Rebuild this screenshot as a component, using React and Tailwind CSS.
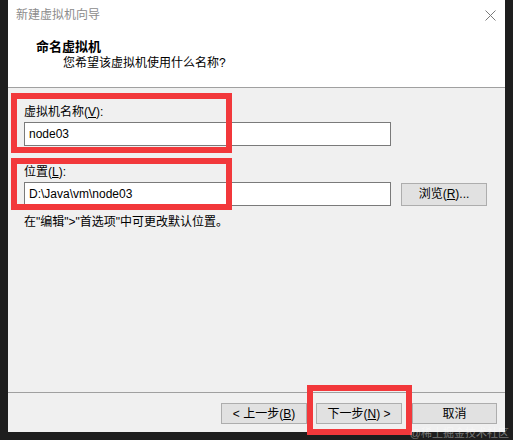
import React from 'react';

const font = { fontFamily: '"Liberation Sans", "Noto Sans CJK SC", sans-serif' };

function WinButton({ children, className = '' }) {
  return (
    <button
      className={`h-[21px] border border-[#adadad] bg-[#e1e1e1] text-[12px] leading-none text-black flex items-center justify-center ${className}`}
    >
      {children}
    </button>
  );
}

function App() {
  return (
    <div className="relative w-[513px] h-[440px] bg-[#1e1e1e] overflow-hidden" style={font}>
      <div className="ml-[8px] w-[497px] h-[432px] flex flex-col bg-[#f0f0f0]">
        {/* header */}
        <div className="h-[88px] bg-white border-b border-[#a0a0a0] flex flex-col">
          <div className="h-[30px] flex items-center justify-between pl-[8px] pr-[9px]">
            <span className="text-[12px] text-[#8c8c8c] leading-none">新建虚拟机向导</span>
            <svg width="11" height="11" viewBox="0 0 11 11" className="text-[#7a7a7a]">
              <path d="M0.5 0.5 L10.5 10.5 M10.5 0.5 L0.5 10.5" stroke="currentColor" strokeWidth="1" fill="none" />
            </svg>
          </div>
          <div className="pl-[28px] pt-[9px] text-[13px] font-bold leading-[16px] text-black">命名虚拟机</div>
          <div className="pl-[55px] pt-[0px] text-[12px] leading-[16px] text-black">您希望该虚拟机使用什么名称?</div>
        </div>

        {/* body */}
        <div className="flex-1 px-[16px] pt-[16px] text-[12px] text-black">
          <div className="leading-[16px]">
            虚拟机名称(<span className="underline">V</span>):
          </div>
          <div className="mt-[2px] w-[367px] h-[24px] bg-white border border-[#7a7a7a] flex items-center px-[4px] leading-none">
            node03
          </div>
          <div className="mt-[18px] leading-[16px]">
            位置(<span className="underline">L</span>):
          </div>
          <div className="mt-[2px] flex items-center gap-[10px]">
            <div className="w-[367px] h-[24px] bg-white border border-[#7a7a7a] flex items-center px-[4px] leading-none">
              D:\Java\vm\node03
            </div>
            <WinButton className="w-[86px] h-[23px]">
              浏览(<span className="underline">R</span>)...
            </WinButton>
          </div>
          <div className="mt-[8px] leading-[16px]">在"编辑"&gt;"首选项"中可更改默认位置。</div>
        </div>

        {/* footer */}
        <div className="h-[40px] border-t border-[#a0a0a0] flex justify-end items-start pt-[10px] pr-[8px] gap-[9px]">
          <WinButton className="w-[86px]">
            &lt; 上一步(<span className="underline">B</span>)
          </WinButton>
          <WinButton className="w-[86px]">
            下一步(<span className="underline">N</span>) &gt;
          </WinButton>
          <WinButton className="w-[85px] ml-[1px]">取消</WinButton>
        </div>
      </div>

      {/* annotation boxes */}
      <div className="absolute left-[11px] top-[93px] w-[221px] h-[60px] border-[6px] border-[#f2383b]" />
      <div className="absolute left-[11px] top-[158px] w-[221px] h-[52px] border-[6px] border-[#f2383b]" />
      <div className="absolute left-[307px] top-[385px] w-[105px] h-[50px] border-[6px] border-[#f2383b]" />

      {/* watermark */}
      <div className="absolute right-[4px] bottom-[1px] text-[11px] leading-none text-white/40">@稀土掘金技术社区</div>
    </div>
  );
}

export default App;
